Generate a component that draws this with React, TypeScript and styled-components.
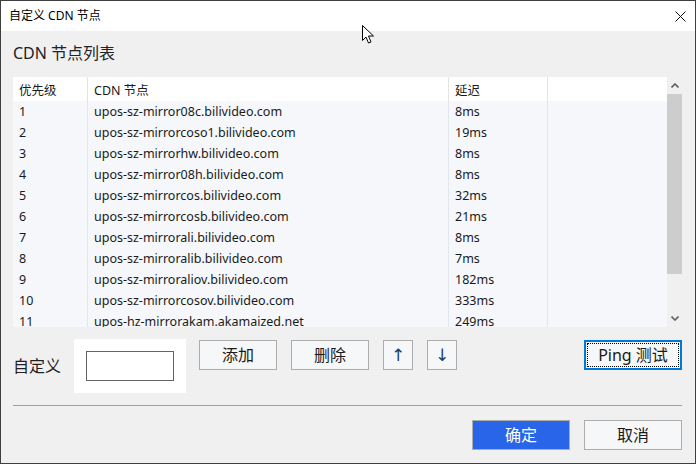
import styled, { createGlobalStyle } from 'styled-components'

const GlobalStyle = createGlobalStyle`
  html, body {
    margin: 0;
    padding: 0;
    background: #f0f0f0;
  }
  body {
    font-family: "Noto Sans", "Noto Sans CJK SC", sans-serif;
    color: #000;
  }
  * {
    box-sizing: border-box;
  }
`

const Window = styled.div`
  position: relative;
  width: 696px;
  height: 464px;
  border: 1px solid #3f3f3f;
  background: #f0f0f0;
  display: flex;
  flex-direction: column;
  overflow: hidden;
`

const TitleBar = styled.div`
  height: 30px;
  flex-shrink: 0;
  background: #fff;
  display: flex;
  align-items: center;
  justify-content: space-between;
  padding-left: 8px;
  font: 12px/1 "Noto Sans", "Noto Sans CJK SC", sans-serif;
`

const CloseButton = styled.div`
  width: 30px;
  height: 30px;
  display: flex;
  align-items: center;
  justify-content: center;
`

const Content = styled.div`
  flex: 1;
  display: flex;
  flex-direction: column;
  padding: 11px 13px 0 12px;
`

const Heading = styled.h2`
  margin: 0 0 13px;
  font: 16px/22px "Noto Sans", "Noto Sans CJK SC", sans-serif;
  color: #222;
`

const Table = styled.div`
  height: 250px;
  display: flex;
  flex-shrink: 0;
`

const Grid = styled.div`
  flex: 1;
  overflow: hidden;
  background: #f5f7fa;
`

const HeaderRow = styled.div`
  display: grid;
  grid-template-columns: 75px 361px 99px 1fr;
  height: 24px;
  background: #fff;
`

const Row = styled.div`
  display: grid;
  grid-template-columns: 75px 361px 99px 1fr;
  height: 21px;
`

const Cell = styled.div<{ $head?: boolean }>`
  display: flex;
  align-items: center;
  padding-left: 6px;
  font-size: 12.5px;
  color: #1a1a1a;
  white-space: nowrap;
  border-right: 1px solid ${p => (p.$head ? '#e3e3e3' : '#e2e7ef')};

  &:last-child {
    border-right: none;
  }
`

const Scrollbar = styled.div`
  width: 15px;
  background: #f0f0f0;
  display: flex;
  flex-direction: column;
`

const ScrollArrow = styled.div`
  height: 17px;
  display: flex;
  align-items: center;
  justify-content: center;
`

const Track = styled.div`
  flex: 1;
`

const Thumb = styled.div`
  height: 180px;
  background: #cdcdcd;
`

const ControlRow = styled.div`
  margin-top: 12px;
  height: 54px;
  display: flex;
  align-items: flex-start;
`

const Label = styled.div`
  width: 61px;
  line-height: 54px;
  font-size: 16px;
  color: #222;
`

const InputWell = styled.div`
  width: 112px;
  height: 54px;
  padding: 12px;
  background: #fff;
`

const Input = styled.input`
  width: 88px;
  height: 30px;
  border: 1px solid #646464;
  background: #fff;
  outline: none;
  padding: 0 4px;
`

const Button = styled.button<{ $w: number; $gap?: number; $primary?: boolean; $focus?: boolean }>`
  position: relative;
  width: ${p => p.$w}px;
  height: 30px;
  margin-top: 1px;
  margin-left: ${p => (p.$gap === undefined ? 0 : p.$gap)}px;
  border: ${p => (p.$focus ? '2px solid #0078d7' : '1px solid #adadad')};
  background: ${p => (p.$primary ? '#2865e8' : '#f6f7f9')};
  color: ${p => (p.$primary ? '#fff' : '#1a1a1a')};
  font: 16px/1 "Noto Sans", "Noto Sans CJK SC", sans-serif;
  padding: 0;
  display: flex;
  align-items: center;
  justify-content: center;

  ${p =>
    p.$focus &&
    `
    &::after {
      content: '';
      position: absolute;
      inset: 1px;
      border: 1px dotted #000;
    }
  `}
`

const PingButton = styled(Button)`
  margin-left: auto;
`

const ArrowGlyph = styled.span`
  font: 17px/1 "DejaVu Sans", sans-serif;
  color: #1d3f66;
`

const Separator = styled.div`
  margin-top: 12px;
  height: 1px;
  background: #a0a0a0;
`

const Footer = styled.div`
  margin-top: 14px;
  display: flex;
  justify-content: flex-end;
  gap: 14px;

  & > button {
    margin-top: 0;
  }
`

const Cursor = styled.svg`
  position: absolute;
  left: 360px;
  top: 23px;
`

const nodes: [string, string][] = [
  ['upos-sz-mirror08c.bilivideo.com', '8ms'],
  ['upos-sz-mirrorcoso1.bilivideo.com', '19ms'],
  ['upos-sz-mirrorhw.bilivideo.com', '8ms'],
  ['upos-sz-mirror08h.bilivideo.com', '8ms'],
  ['upos-sz-mirrorcos.bilivideo.com', '32ms'],
  ['upos-sz-mirrorcosb.bilivideo.com', '21ms'],
  ['upos-sz-mirrorali.bilivideo.com', '8ms'],
  ['upos-sz-mirroralib.bilivideo.com', '7ms'],
  ['upos-sz-mirroraliov.bilivideo.com', '182ms'],
  ['upos-sz-mirrorcosov.bilivideo.com', '333ms'],
  ['upos-hz-mirrorakam.akamaized.net', '249ms'],
]

const App = () => {
  return (
    <Window>
      <GlobalStyle />
      <TitleBar>
        <span>自定义 CDN 节点</span>
        <CloseButton>
          <svg width='11' height='11' viewBox='0 0 11 11'>
            <path d='M0.5 0.5 L10.5 10.5 M10.5 0.5 L0.5 10.5' stroke='#111' strokeWidth='1' />
          </svg>
        </CloseButton>
      </TitleBar>
      <Content>
        <Heading>CDN 节点列表</Heading>
        <Table>
          <Grid>
            <HeaderRow>
              <Cell $head>优先级</Cell>
              <Cell $head>CDN 节点</Cell>
              <Cell $head>延迟</Cell>
              <Cell $head />
            </HeaderRow>
            {nodes.map(([host, ping], i) => (
              <Row key={host}>
                <Cell>{i + 1}</Cell>
                <Cell>{host}</Cell>
                <Cell>{ping}</Cell>
                <Cell />
              </Row>
            ))}
          </Grid>
          <Scrollbar>
            <ScrollArrow>
              <svg width='8' height='5' viewBox='0 0 8 5'>
                <path d='M0.5 4.5 L4 1 L7.5 4.5' stroke='#606060' strokeWidth='1.6' fill='none' />
              </svg>
            </ScrollArrow>
            <Track>
              <Thumb />
            </Track>
            <ScrollArrow>
              <svg width='8' height='5' viewBox='0 0 8 5'>
                <path d='M0.5 0.5 L4 4 L7.5 0.5' stroke='#606060' strokeWidth='1.6' fill='none' />
              </svg>
            </ScrollArrow>
          </Scrollbar>
        </Table>
        <ControlRow>
          <Label>自定义</Label>
          <InputWell>
            <Input />
          </InputWell>
          <Button $w={78} $gap={13}>添加</Button>
          <Button $w={78} $gap={14}>删除</Button>
          <Button $w={30} $gap={14}>
            <ArrowGlyph>↑</ArrowGlyph>
          </Button>
          <Button $w={30} $gap={14}>
            <ArrowGlyph>↓</ArrowGlyph>
          </Button>
          <PingButton $w={98} $focus>
            Ping 测试
          </PingButton>
        </ControlRow>
        <Separator />
        <Footer>
          <Button $w={98} $primary>确定</Button>
          <Button $w={98}>取消</Button>
        </Footer>
      </Content>
      <Cursor width='14' height='21' viewBox='0 0 14 21'>
        <path
          d='M1.5 1.5 L1.5 16.5 L5 13 L7.5 19 L10 18 L7.5 12 L12.5 12 Z'
          fill='#fff'
          stroke='#000'
          strokeWidth='1'
          strokeLinejoin='miter'
        />
      </Cursor>
    </Window>
  )
}

export default App
